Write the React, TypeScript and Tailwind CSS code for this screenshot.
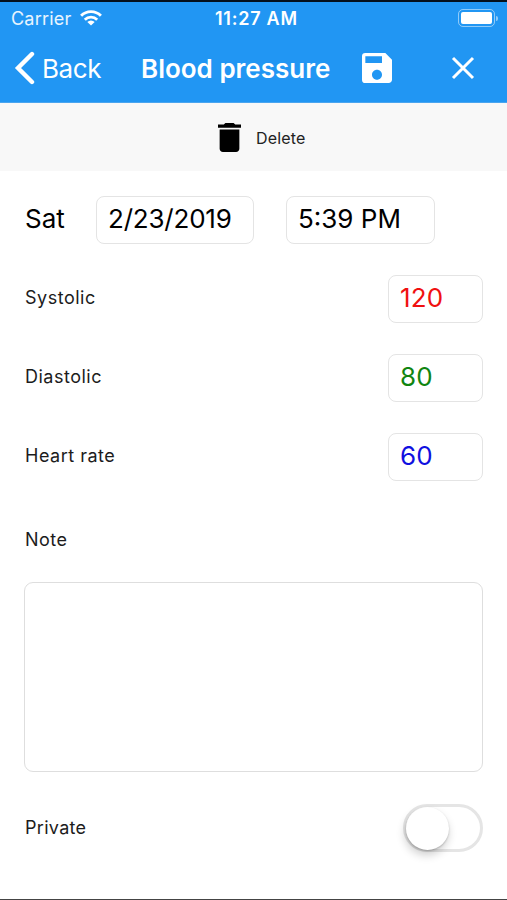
import type { ReactNode } from "react";

function StatusBar() {
  return (
    <div className="flex h-8 items-center text-white">
      <div className="flex w-[200px] items-center pl-[11px]">
        <span className="w-[69px] pt-px text-[18px] leading-8 tracking-[0.2px] text-white/90">Carrier</span>
        <svg className="h-4 w-[22px]" viewBox="0 0 22 16" fill="none" stroke="white" strokeWidth="2.9">
          <path d="M1.1 5.7A14 14 0 0 1 20.9 5.7" />
          <path d="M4.8 9.7A8.8 8.8 0 0 1 17.2 9.7" />
          <path d="M11 15.6 7.3 12A5.2 5.2 0 0 1 14.7 12Z" fill="white" stroke="none" />
        </svg>
      </div>
      <span className="w-[110px] pl-[15px] pt-px text-[18px] font-semibold leading-8 tracking-[0.75px] whitespace-nowrap">11:27 AM</span>
      <div className="ml-auto mr-[9px] flex items-center gap-px">
        <div className="h-[18px] w-[37px] rounded-[5px] border border-white/50 p-0.5">
          <div className="h-full w-full rounded-[2px] bg-white" />
        </div>
        <div className="h-[5px] w-[2px] rounded-r-full bg-white/50" />
      </div>
    </div>
  );
}

function NavBar() {
  return (
    <div className="flex h-[68px] items-center text-white">
      <button className="flex w-[141px] items-center pl-[14px]">
        <svg className="h-[34px] w-[21px]" viewBox="0 0 21 34" fill="none" stroke="white" strokeWidth="4.4" strokeLinecap="round">
          <path d="M18 3 4 17 18 31" strokeLinejoin="miter" />
        </svg>
        <span className="ml-[7px] pt-px text-[26px] leading-8 tracking-[-0.4px]">Back</span>
      </button>
      <h1 className="w-[221px] pt-px text-[26px] font-semibold leading-8 whitespace-nowrap">Blood pressure</h1>
      <svg className="h-[30px] w-[30px]" viewBox="3 3 18 18" fill="white">
        <path d="M17 3H5a2 2 0 0 0-2 2v14a2 2 0 0 0 2 2h14c1.100 0 2-.9 2-2V7l-4-4zm-5 16c-1.660 0-3-1.340-3-3s1.340-3 3-3 3 1.340 3 3-1.340 3-3 3zm3-10H5V5h10v4z" />
      </svg>
      <svg className="ml-[59px] h-6 w-6" viewBox="0 0 24 24" fill="none" stroke="white" strokeWidth="3">
        <path d="M2 2 22 22M22 2 2 22" />
      </svg>
    </div>
  );
}

function Value({ className, children }: { className: string; children: ReactNode }) {
  return (
    <div className={`flex h-12 items-center rounded-[8px] border border-[#e4e4e4] pb-[3px] pl-[11px] text-[26px] whitespace-nowrap ${className}`}>
      {children}
    </div>
  );
}

function Reading({ label, value, color }: { label: string; value: string; color: string }) {
  return (
    <div className="flex h-12 items-center justify-between">
      <span className="pb-1 text-[18px] tracking-[0.5px] text-[#1c1c1c]">{label}</span>
      <Value className={`w-[95px] tracking-[0.2px] ${color}`}>{value}</Value>
    </div>
  );
}

export default function App() {
  return (
    <div className="flex h-[900px] w-[507px] flex-col overflow-hidden border-t-2 border-b border-t-[#04101c] border-b-[#444] bg-white font-['Inter','Liberation_Sans',sans-serif] text-black">
      <header className="h-[101px] shrink-0 border-b border-[#4aa5ef] bg-[#2196f3]">
        <StatusBar />
        <NavBar />
      </header>
      <div className="flex h-[68px] shrink-0 items-center bg-[#f8f8f8] pl-[218px]">
        <svg className="h-[29px] w-[23px]" viewBox="5 3 14 18" preserveAspectRatio="none">
          <path d="M6 19c0 1.100.9 2 2 2h8c1.100 0 2-.9 2-2V7H6v12zM19 4h-3.500l-1-1h-5l-1 1H5v2h14V4z" />
        </svg>
        <span className="ml-[15px] pt-0.5 text-[16px] tracking-[0.15px] text-[#222]">Delete</span>
      </div>
      <main className="px-6 pt-[25px]">
        <div className="flex items-center">
          <span className="w-[72px] pb-[3px] pl-px text-[26px]">Sat</span>
          <Value className="w-[158px] tracking-[-0.2px]">2/23/2019</Value>
          <Value className="ml-8 w-[149px]">5:39 PM</Value>
        </div>
        <div className="mt-[31px] flex flex-col gap-[31px] pl-px">
          <Reading label="Systolic" value="120" color="text-[#f01010]" />
          <Reading label="Diastolic" value="80" color="text-[#108510]" />
          <Reading label="Heart rate" value="60" color="text-[#1010e0]" />
        </div>
        <div className="mt-[45px] pl-px text-[18px] leading-7 tracking-[0.5px] text-[#1c1c1c]">Note</div>
        <div className="mt-7 h-[190px] rounded-[9px] border-[1.5px] border-[#dedede]" />
        <div className="mt-8 flex h-12 items-center justify-between pl-px">
          <span className="pb-0.5 text-[18px] tracking-[0.3px] text-[#1c1c1c]">Private</span>
          <div className="h-12 w-20 rounded-full border-[3px] border-[#e5e5e5]">
            <div className="h-[43px] w-[43px] rounded-full bg-white shadow-[-1px_5px_10px_rgba(0,0,0,0.2),0_1px_2px_rgba(0,0,0,0.2)]" />
          </div>
        </div>
      </main>
    </div>
  );
}
